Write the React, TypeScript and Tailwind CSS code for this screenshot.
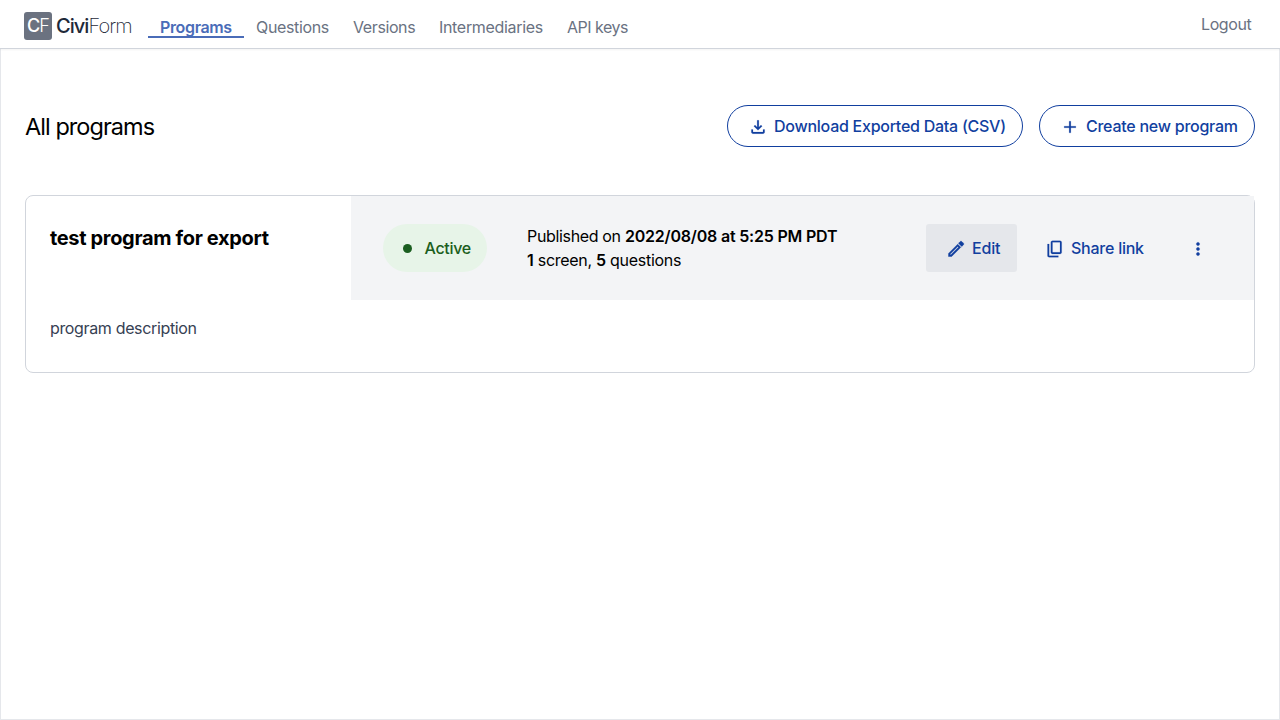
import type { ReactNode } from "react";

const ICONS = {
  download:
    "M18,15v3H6v-3H4v3c0,1.1,0.9,2,2,2h12c1.1,0,2-0.9,2-2v-3H18z M17,11l-1.41-1.41L13,12.17V4h-2v8.17L8.41,9.59L7,11l5,5 L17,11z",
  add: "M19 13h-6v6h-2v-6H5v-2h6V5h2v6h6v2z",
  edit: "M14.06 9.02l.92.92L5.92 19H5v-.92l9.06-9.06M18 2.7c-.4 0-.8.16-1.1.45l-1.97 1.97 3.95 3.95 1.97-1.97c.6-.6.6-1.56 0-2.16l-1.75-1.79c-.3-.29-.7-.45-1.1-.45zM14.06 6.19L3 17.25V21h3.75L17.81 9.94l-3.75-3.75z",
  copy: "M9 18q-.825 0-1.413-.588Q7 16.825 7 16V4q0-.825.587-1.413Q8.175 2 9 2h9q.825 0 1.413.587Q20 3.175 20 4v12q0 .825-.587 1.412Q18.825 18 18 18Zm0-2h9V4H9v12Zm-4 6q-.825 0-1.413-.587Q3 20.825 3 20V6h2v14h11v2Z",
  more: "M12 8c1.1 0 2-.9 2-2s-.9-2-2-2-2 .9-2 2 .9 2 2 2zm0 2c-1.1 0-2 .9-2 2s.9 2 2 2 2-.9 2-2-.9-2-2-2zm0 6c-1.1 0-2 .9-2 2s.9 2 2 2 2-.9 2-2-.9-2-2-2z",
};

function Icon({ name, className = "" }: { name: keyof typeof ICONS; className?: string }) {
  return (
    <svg
      viewBox="0 0 24 24"
      fill="currentColor"
      stroke="currentColor"
      strokeLinejoin="round"
      strokeWidth={name === "edit" ? 0.5 : 0.2}
      className={`size-5 shrink-0 ${className}`}
    >
      <path d={ICONS[name]} />
    </svg>
  );
}

function NavLink({ children, className }: { children: ReactNode; className: string }) {
  return (
    <a href="#" className={`ml-6 block shrink-0 text-gray-500 ${className}`}>
      {children}
    </a>
  );
}

export default function App() {
  return (
    <div className="flex h-[720px] w-[1280px] flex-col overflow-hidden bg-white font-['Inter','Liberation_Sans',sans-serif] text-base whitespace-nowrap text-black">
      <nav className="z-10 flex h-[49px] shrink-0 items-start border-b border-gray-300 pl-6 shadow-xs">
        <div className="mt-3 flex size-7 items-center justify-center rounded-[3px] bg-[#6b7280] text-[18px] leading-7 tracking-[-1px] text-white">
          <span className="font-medium">C</span>
          <span className="font-light">F</span>
        </div>
        <div className="mt-3 ml-1 w-[76px] text-[20px] leading-7 tracking-[-0.95px] text-gray-800">
          <span className="font-medium">Civi</span>
          <span className="font-extralight">Form</span>
        </div>
        <a
          href="#"
          className="mt-[15px] ml-4 block h-[23px] w-24 border-b-2 border-[#4a6cb8] pl-3 leading-6 font-semibold tracking-[-0.36px] text-[#4a6cb8]"
        >
          Programs
        </a>
        <div className="mt-[15px] -ml-3 flex leading-6">
          <NavLink className="w-[73px] tracking-[-0.35px]">Questions</NavLink>
          <NavLink className="w-[62px] tracking-[-0.4px]">Versions</NavLink>
          <NavLink className="w-[104px] tracking-[-0.32px]">Intermediaries</NavLink>
          <NavLink className="w-[62px] tracking-[-0.5px]">API keys</NavLink>
        </div>
        <a href="#" className="mt-3 mr-7 ml-auto w-[51px] leading-6 tracking-[-0.4px] text-gray-500">
          Logout
        </a>
      </nav>

      <main className="flex-1 border-x border-b border-gray-200 px-6">
        <header className="mt-14 flex h-[42px] items-center">
          <h1 className="mt-0.5 mr-auto text-[23.5px] leading-8 tracking-[-0.95px]">All programs</h1>
          <button className="mr-4 flex h-[42px] w-[296px] items-center rounded-full border border-[#113f9f] pl-5 font-medium text-[#113f9f]">
            <Icon name="download" className="mt-px" />
            <span className="ml-1.5 tracking-[-0.26px]">Download Exported Data (CSV)</span>
          </button>
          <button className="flex h-[42px] w-[216px] items-center rounded-full border border-[#113f9f] pl-5 font-medium text-[#113f9f]">
            <Icon name="add" className="mt-px" />
            <span className="ml-1.5 tracking-[-0.25px]">Create new program</span>
          </button>
        </header>

        <section className="mt-12 h-[178px] rounded-lg border border-gray-300">
          <div className="flex h-[104px]">
            <h2 className="w-[325px] pt-7 pl-6 text-xl leading-7 font-bold tracking-[-0.34px]">
              test program for export
            </h2>
            <div className="flex flex-1 items-center bg-gray-100 pl-8">
              <div className="flex h-12 w-[104px] items-center rounded-full bg-[#e7f4e8] pl-[19.5px] font-medium text-[#1b5e20]">
                <span className="size-[9px] rounded-full bg-[#1b5e20]" />
                <span className="ml-[13px] tracking-[-0.3px]">Active</span>
              </div>
              <div className="ml-10 w-[399px] leading-6 tracking-[-0.28px]">
                <p className="tracking-[-0.34px]">
                  Published on{" "}
                  <span className="font-semibold tracking-[-0.2px]">2022/08/08 at 5:25 PM PDT</span>
                </p>
                <p>
                  <span className="font-semibold">1</span> screen, <span className="font-semibold">5</span> questions
                </p>
              </div>
              <button className="flex h-12 w-[91px] items-center rounded-[3px] bg-gray-200 pl-5 font-medium text-[#113f9f]">
                <Icon name="edit" className="mt-0.5" />
                <span className="ml-1.5 tracking-[-0.2px]">Edit</span>
              </button>
              <button className="ml-[28px] flex h-12 w-[115px] items-center font-medium text-[#113f9f]">
                <Icon name="copy" className="mt-px" />
                <span className="ml-1.5 tracking-[-0.24px]">Share link</span>
              </button>
              <button className="ml-7 flex h-12 items-center text-[#113f9f]">
                <Icon name="more" className="mt-px" />
              </button>
            </div>
          </div>
          <p className="pt-4 pl-6 leading-6 tracking-[-0.35px] text-gray-700">program description</p>
        </section>
      </main>
    </div>
  );
}
